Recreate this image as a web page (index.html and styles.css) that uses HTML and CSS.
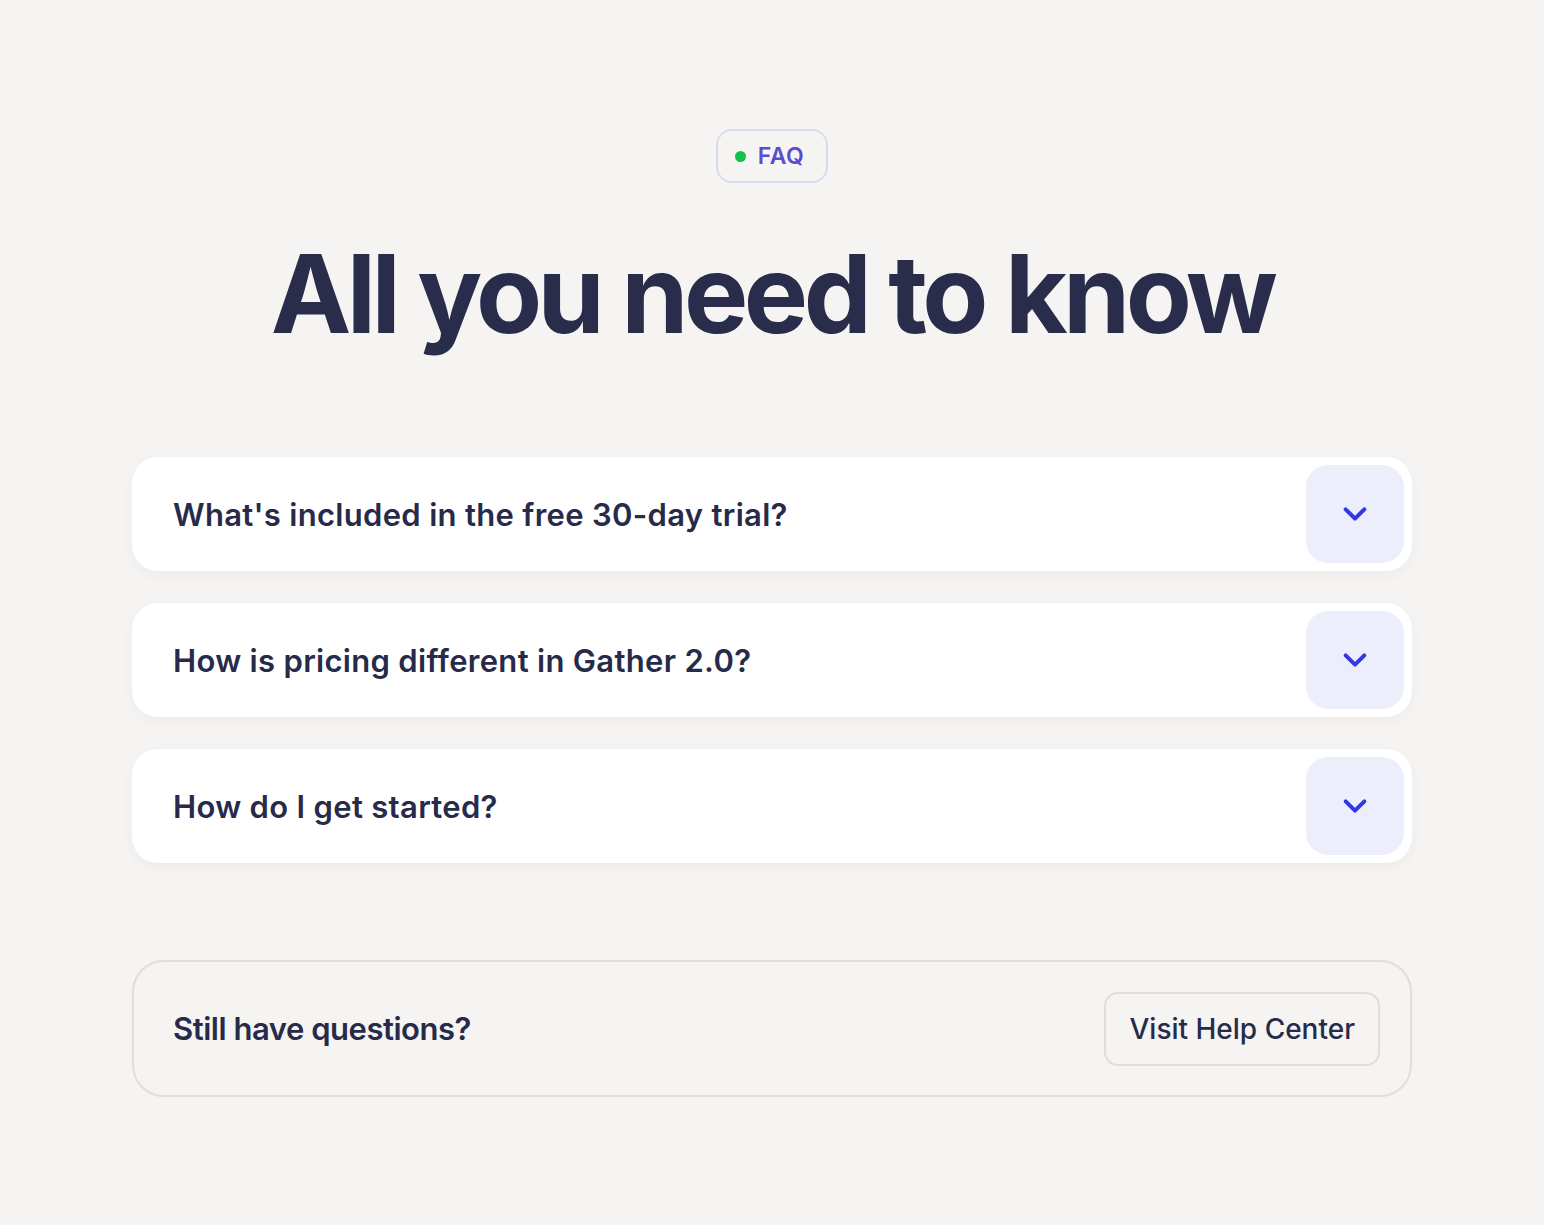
FILE: index.html
```html
<!DOCTYPE html>
<html lang="en">
<head>
  <meta charset="UTF-8">
  <meta name="viewport" content="width=device-width, initial-scale=1.0">
  <title>FAQ</title>
  <link rel="stylesheet" href="styles.css">
</head>
<body>
  <section class="faq">
    <div class="faq-tag">
      <span class="dot"></span>
      FAQ
    </div>

    <h1>All you need to know</h1>

    <div class="faq-list">
      <div class="faq-item">
        <span class="question">What's included in the free 30-day trial?</span>
        <button class="toggle" aria-label="Expand">
          <svg viewBox="0 0 24 24" fill="none" stroke="currentColor" stroke-width="3" stroke-linecap="round" stroke-linejoin="round">
            <polyline points="5 8.5 12 15.5 19 8.5"></polyline>
          </svg>
        </button>
      </div>
      <div class="faq-item">
        <span class="question">How is pricing different in Gather 2.0?</span>
        <button class="toggle" aria-label="Expand">
          <svg viewBox="0 0 24 24" fill="none" stroke="currentColor" stroke-width="3" stroke-linecap="round" stroke-linejoin="round">
            <polyline points="5 8.5 12 15.5 19 8.5"></polyline>
          </svg>
        </button>
      </div>
      <div class="faq-item">
        <span class="question">How do I get started?</span>
        <button class="toggle" aria-label="Expand">
          <svg viewBox="0 0 24 24" fill="none" stroke="currentColor" stroke-width="3" stroke-linecap="round" stroke-linejoin="round">
            <polyline points="5 8.5 12 15.5 19 8.5"></polyline>
          </svg>
        </button>
      </div>
    </div>

    <div class="help-box">
      <span class="help-title">Still have questions?</span>
      <a class="help-button" href="#">Visit Help Center</a>
    </div>
  </section>
</body>
</html>
```

FILE: styles.css
```css
:root {
  --background: #f5f4f2;
  --text: #272b49;
  --purple: #5a4dcc;
  --purple-border: #dcd8ef;
  --green: #12c249;
  --blue: #3438e0;
  --toggle-bg: #eceefc;
  --border: #e0dedb;
}

body {
  font-family: Inter, 'Noto Sans', sans-serif;
  background-color: var(--background);
  color: var(--text);
  margin: 0;
}

.faq {
  width: 1280px;
  margin: 0 auto;
  padding: 129px 0 0;
  display: flex;
  flex-direction: column;
  align-items: center;
}

.faq-tag {
  display: flex;
  align-items: center;
  gap: 12px;
  height: 54px;
  box-sizing: border-box;
  padding: 0 22px 0 17px;
  border: 2px solid var(--purple-border);
  border-radius: 16px;
  color: var(--purple);
  font-size: 23px;
  font-weight: 600;
  letter-spacing: 0.02em;
}

.dot {
  width: 11px;
  height: 11px;
  border-radius: 50%;
  background-color: var(--green);
}

h1 {
  font-size: 108px;
  font-weight: 700;
  letter-spacing: -0.042em;
  line-height: 1;
  margin: 57px 0 0;
  color: #292d4b;
}

.faq-list {
  align-self: stretch;
  display: flex;
  flex-direction: column;
  gap: 32px;
  margin-top: 109px;
}

.faq-item {
  display: flex;
  align-items: center;
  justify-content: space-between;
  height: 114px;
  box-sizing: border-box;
  padding: 8px 8px 8px 41px;
  background-color: white;
  border-radius: 26px;
  box-shadow: 0 4px 14px rgba(40, 36, 30, 0.04);
}

.question {
  font-size: 31px;
  font-weight: 600;
  letter-spacing: 0.01em;
}

.toggle {
  width: 98px;
  height: 98px;
  border: none;
  border-radius: 22px;
  background-color: var(--toggle-bg);
  color: var(--blue);
  display: flex;
  align-items: center;
  justify-content: center;
  cursor: pointer;
  padding: 0;
}

.toggle svg {
  width: 32px;
  height: 32px;
}

.help-box {
  align-self: stretch;
  display: flex;
  align-items: center;
  justify-content: space-between;
  margin-top: 97px;
  height: 137px;
  box-sizing: border-box;
  padding: 0 30px 0 39px;
  border: 2px solid var(--border);
  border-radius: 32px;
}

.help-title {
  font-size: 31px;
  font-weight: 600;
  letter-spacing: -0.015em;
}

.help-button {
  display: flex;
  align-items: center;
  height: 74px;
  box-sizing: border-box;
  padding: 0 23px;
  border: 2px solid var(--border);
  border-radius: 14px;
  color: var(--text);
  text-decoration: none;
  font-size: 28px;
  font-weight: 500;
}
```
